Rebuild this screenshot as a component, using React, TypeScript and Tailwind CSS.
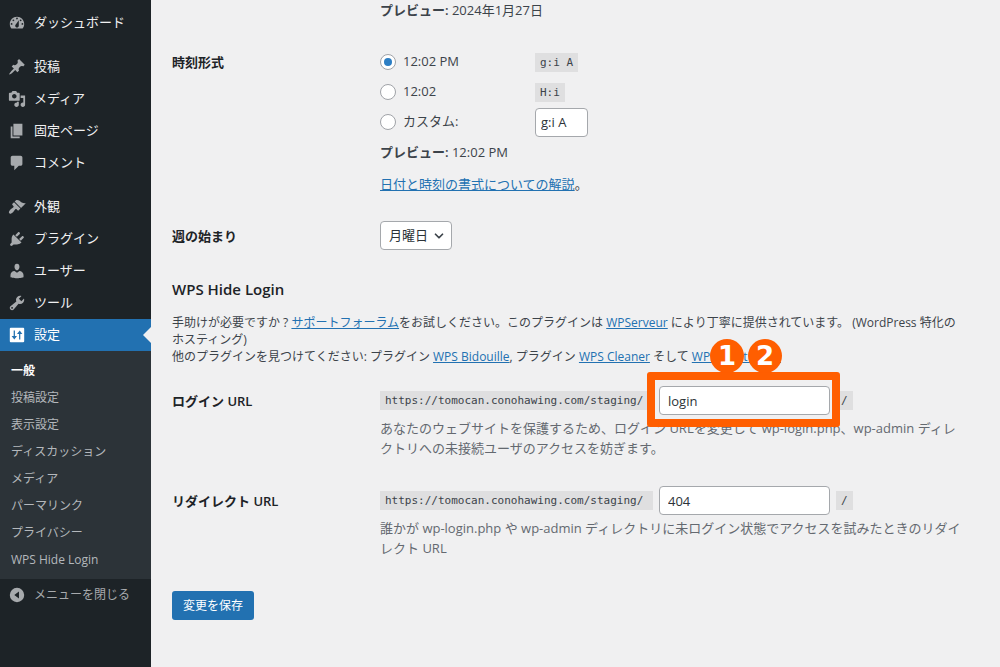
import React, { useState } from 'react';
import clsx from 'clsx';
import { ChevronDown } from 'lucide-react';

const menuIcons = {
  dashboard:
    'M3.76 16h12.48c1.1-1.37 1.76-3.11 1.76-5 0-4.42-3.58-8-8-8s-8 3.58-8 8c0 1.89.66 3.63 1.76 5zM10 4c.55 0 1 .45 1 1s-.45 1-1 1-1-.45-1-1 .45-1 1-1zM6 6c.55 0 1 .45 1 1s-.45 1-1 1-1-.45-1-1 .45-1 1-1zm8 0c.55 0 1 .45 1 1s-.45 1-1 1-1-.45-1-1 .45-1 1-1zm-5.37 5.55L12 7v6c0 1.1-.9 2-2 2s-2-.9-2-2c0-.57.24-1.08.63-1.45zM4 10c.55 0 1 .45 1 1s-.45 1-1 1-1-.45-1-1 .45-1 1-1zm12 0c.55 0 1 .45 1 1s-.45 1-1 1-1-.45-1-1 .45-1 1-1z',
  post: 'M10.44 3.02l1.82-1.82 6.36 6.35-1.83 1.82c-1.05-.68-2.48-.57-3.41.36l-.75.75c-.92.93-1.04 2.35-.35 3.41l-1.83 1.82-2.41-2.41-2.8 2.79c-.42.42-3.38 2.71-3.8 2.29s1.86-3.39 2.28-3.81l2.79-2.79L4.1 9.36l1.83-1.82c1.05.69 2.48.57 3.4-.36l.75-.75c.93-.92 1.05-2.35.36-3.41z',
  media:
    'M13 11V4c0-.55-.45-1-1-1h-1.67L9 1H5L3.67 3H2c-.55 0-1 .45-1 1v7c0 .55.45 1 1 1h10c.55 0 1-.45 1-1zM7 4.5c1.38 0 2.5 1.12 2.5 2.5S8.38 9.5 7 9.5 4.5 8.38 4.5 7 5.62 4.5 7 4.5zM14 6h5v10.5c0 1.38-1.12 2.5-2.5 2.5S14 17.88 14 16.5s1.12-2.5 2.5-2.5c.17 0 .34.02.5.05V9h-3V6zm-4 8.05V13h2v3.5c0 1.38-1.12 2.5-2.5 2.5S7 17.88 7 16.5 8.12 14 9.5 14c.17 0 .34.02.5.05z',
  page: 'M6 15V2h10v13H6zm-1 1h8v2H3V5h2v11z',
  comments: 'M5 2h9c1.1 0 2 .9 2 2v7c0 1.1-.9 2-2 2h-2l-5 5v-5H5c-1.1 0-2-.9-2-2V4c0-1.1.9-2 2-2z',
  appearance:
    'M14.48 11.06L7.41 3.99l1.5-1.5c.5-.56 2.3-.47 3.51.32 1.21.8 1.43 1.28 2.91 2.1 1.18.64 2.45 1.26 4.45.85zm-.71.71L6.7 4.7 4.93 6.47c-.39.39-.39 1.02 0 1.41l1.06 1.06c.39.39.39 1.03 0 1.42-.6.6-1.43 1.11-2.21 1.69-.35.26-.7.53-1.01.84C1.43 14.23.4 16.08 1.4 17.07c.99 1 2.84-.03 4.18-1.36.31-.31.58-.66.85-1.02.57-.78 1.08-1.61 1.69-2.21.39-.39 1.02-.39 1.41 0l1.06 1.06c.39.39 1.02.39 1.41 0z',
  plugins:
    'M13.11 4.36L9.87 7.6 8 5.73l3.24-3.24c.35-.34 1.05-.2 1.56.32.52.51.66 1.21.31 1.55zm-8 1.77l.91-1.12 9.01 9.01-1.19.84c-.71.71-2.63 1.16-3.82 1.16H6.14L4.9 17.26c-.59.59-1.54.59-2.12 0-.59-.58-.59-1.53 0-2.12l1.24-1.24v-3.88c0-1.13.4-3.19 1.09-3.89zm7.26 3.97l3.24-3.24c.34-.35 1.04-.21 1.55.31.52.51.66 1.21.31 1.55l-3.24 3.25z',
  users:
    'M10 9.25c-2.27 0-2.73-3.44-2.73-3.44C7 4.02 7.82 2 9.97 2c2.16 0 2.98 2.02 2.71 3.81 0 0-.41 3.44-2.68 3.44zm0 2.57L12.72 10c2.39 0 4.52 2.33 4.52 4.53v2.49s-3.65 1.13-7.24 1.13c-3.65 0-7.24-1.13-7.24-1.13v-2.49c0-2.25 1.94-4.48 4.47-4.48z',
  tools:
    'M16.68 9.77c-1.34 1.34-3.3 1.67-4.95.99l-5.41 6.52c-.99.99-2.59.99-3.58 0s-.99-2.59 0-3.57l6.52-5.42c-.68-1.65-.35-3.61.99-4.95 1.28-1.28 3.12-1.62 4.72-1.06l-2.89 2.89 2.82 2.82 2.86-2.87c.53 1.58.18 3.39-1.08 4.65zM3.81 16.21c.4.39 1.04.39 1.43 0 .4-.4.4-1.04 0-1.43-.39-.4-1.03-.4-1.43 0-.39.39-.39 1.03 0 1.43z',
  settings:
    'M18 17V3c0-.55-.45-1-1-1H3c-.55 0-1 .45-1 1v14c0 .55.45 1 1 1h14c.55 0 1-.45 1-1zM6.3 5h1.4v6H10l-3 4-3-4h2.3zM12.3 15h1.4V9H16l-3-4-3 4h2.3z',
  collapse: 'M10 2a8 8 0 1 0 0 16 8 8 0 0 0 0-16zM12.2 6v8L7 10z',
};

type IconName = keyof typeof menuIcons;

const menuGroups: { icon: IconName; label: string }[][] = [
  [{ icon: 'dashboard', label: 'ダッシュボード' }],
  [
    { icon: 'post', label: '投稿' },
    { icon: 'media', label: 'メディア' },
    { icon: 'page', label: '固定ページ' },
    { icon: 'comments', label: 'コメント' },
  ],
  [
    { icon: 'appearance', label: '外観' },
    { icon: 'plugins', label: 'プラグイン' },
    { icon: 'users', label: 'ユーザー' },
    { icon: 'tools', label: 'ツール' },
    { icon: 'settings', label: '設定' },
  ],
];

const settingsPages = [
  '一般',
  '投稿設定',
  '表示設定',
  'ディスカッション',
  'メディア',
  'パーマリンク',
  'プライバシー',
  'WPS Hide Login',
];

const timeFormats = [
  { value: 'g:i A', label: '12:02 PM' },
  { value: 'H:i', label: '12:02' },
];

const inputClass = 'h-[29px] rounded-[4px] border border-[#a5a8ac] bg-white px-2 text-[13px] text-[#2c3338]';
const radioClass =
  'grid size-4 shrink-0 appearance-none place-items-center rounded-full border border-[#a0a3a8] bg-white before:size-2 before:rounded-full checked:before:bg-[#2c7ec4]';

const MenuIcon = ({ name }: { name: IconName }) => (
  <svg viewBox="0 0 20 20" className="size-[18px] shrink-0" fill="currentColor" fillRule="evenodd" aria-hidden="true">
    <path d={menuIcons[name]} />
  </svg>
);

const Code = ({ children, className }: { children: React.ReactNode; className?: string }) => (
  <code
    className={clsx(
      "inline-block bg-[#dfdfe0] px-[5px] font-['DejaVu_Sans_Mono',monospace] text-[11px] leading-[19px] text-[#3c434a]",
      className
    )}
  >
    {children}
  </code>
);

const TextLink = ({ children }: { children: React.ReactNode }) => (
  <a href="#" className="text-[#2271b1] underline">
    {children}
  </a>
);

const Row = ({ label, htmlFor, children }: { label?: string; htmlFor?: string; children: React.ReactNode }) => (
  <div className="flex">
    <div className="w-[208px] shrink-0 pt-[5px] font-semibold leading-5 text-[#1d2327]">
      {htmlFor ? <label htmlFor={htmlFor}>{label}</label> : label}
    </div>
    <div className="min-w-0 flex-1">{children}</div>
  </div>
);

const Sidebar = () => (
  <nav className="w-[151px] shrink-0 bg-[#1d2327] pt-[7px] text-[#f0f0f1]">
    {menuGroups.map((group, i) => (
      <ul key={i} className={clsx(i > 0 && 'mt-3')}>
        {group.map(item => {
          const current = item.icon === 'settings';
          return (
            <li key={item.icon}>
              <a
                href="#"
                className={clsx('relative flex h-8 items-center gap-2 pl-2', current && 'bg-[#2271b1] text-white')}
              >
                <span className={clsx('flex', !current && 'text-[#a7aaad]')}>
                  <MenuIcon name={item.icon} />
                </span>
                {item.label}
                {current && (
                  <span className="absolute top-2 right-0 border-y-8 border-r-8 border-y-transparent border-r-[#f0f0f1]" />
                )}
              </a>
            </li>
          );
        })}
      </ul>
    ))}
    <ul className="bg-[#2c3338] py-[6px] text-xs">
      {settingsPages.map((page, i) => (
        <li key={page}>
          <a
            href="#"
            className={clsx('block pl-[11px] leading-[27px]', i === 0 ? 'font-semibold text-white' : 'text-[#b4b8bc]')}
          >
            {page}
          </a>
        </li>
      ))}
    </ul>
    <button type="button" className="flex h-8 w-full items-center gap-2 pl-2 text-xs text-[#a7aaad]">
      <MenuIcon name="collapse" />
      メニューを閉じる
    </button>
  </nav>
);

export default function App() {
  const [format, setFormat] = useState('g:i A');
  const [custom, setCustom] = useState('g:i A');

  return (
    <div className="flex min-h-screen bg-[#f0f0f1] font-['Open_Sans','Noto_Sans_CJK_JP',sans-serif] text-[13px] text-[#3c434a]">
      <Sidebar />
      <main className="min-w-0 flex-1 pr-[34px] pl-[21px]">
        <form onSubmit={e => e.preventDefault()}>
          <p className="pl-[208px] leading-5">
            <strong className="font-semibold">プレビュー:</strong> 2024年1月27日
          </p>

          <div className="mt-[27px]">
            <Row label="時刻形式">
              <fieldset aria-label="時刻形式">
                {timeFormats.map(f => (
                  <div key={f.value} className="flex h-[30px] items-center">
                    <label className="flex w-[155px] items-center gap-[7px]">
                      <input
                        type="radio"
                        name="time_format"
                        className={radioClass}
                        checked={format === f.value}
                        onChange={() => setFormat(f.value)}
                      />
                      {f.label}
                    </label>
                    <Code>{f.value}</Code>
                  </div>
                ))}
                <div className="flex h-[30px] items-center">
                  <label className="flex w-[155px] items-center gap-[7px]">
                    <input
                      type="radio"
                      name="time_format"
                      className={radioClass}
                      checked={format === 'custom'}
                      onChange={() => setFormat('custom')}
                    />
                    カスタム:
                  </label>
                  <input
                    type="text"
                    aria-label="カスタム時刻形式"
                    className={clsx(inputClass, 'w-[53px] px-[5px]')}
                    value={custom}
                    onChange={e => setCustom(e.target.value)}
                  />
                </div>
              </fieldset>
              <p className="mt-[5px] leading-5">
                <strong className="font-semibold">プレビュー:</strong> 12:02 PM
              </p>
              <p className="mt-3 leading-5">
                <TextLink>日付と時刻の書式についての解説</TextLink>。
              </p>
            </Row>
          </div>

          <div className="mt-[27px]">
            <Row label="週の始まり" htmlFor="start_of_week">
              <div className="relative inline-flex">
                <select id="start_of_week" className={clsx(inputClass, 'w-[72px] appearance-none')}>
                  <option>月曜日</option>
                </select>
                <ChevronDown className="pointer-events-none absolute top-2 right-[6px] size-[14px]" strokeWidth={3} />
              </div>
            </Row>
          </div>

          <h2 className="mt-[29px] text-[15px] leading-5 font-semibold text-[#1d2327]">WPS Hide Login</h2>
          <p className="mt-[15px] text-xs leading-[17px]">
            手助けが必要ですか ? <TextLink>サポートフォーラム</TextLink>をお試しください。このプラグインは{' '}
            <TextLink>WPServeur</TextLink> により丁寧に提供されています。 (WordPress 特化のホスティング)
            <br />
            他のプラグインを見つけてください: プラグイン <TextLink>WPS Bidouille</TextLink>, プラグイン{' '}
            <TextLink>WPS Cleaner</TextLink> そして <TextLink>WPS Limit Login</TextLink>
          </p>

          <div className="mt-[21px] flex flex-col gap-7">
            <Row label="ログイン URL" htmlFor="whl_page">
              <div className="flex h-[29px] items-center gap-[6px]">
                <Code className="w-[273px]">https://tomocan.conohawing.com/staging/</Code>
                <div className="relative">
                  <input id="whl_page" type="text" defaultValue="login" className={clsx(inputClass, 'block w-[171px]')} />
                  <div className="pointer-events-none absolute -top-[14px] -right-[10px] -bottom-3 -left-3 rounded-[3px] border-8 border-[#ff5e00]" />
                  <div className="pointer-events-none absolute bottom-[42px] left-[51px] flex gap-1 font-['DejaVu_Sans',sans-serif] text-[26px] leading-none font-bold text-white">
                    <span className="grid size-[34px] place-items-center rounded-full bg-[#ff5e00]">1</span>
                    <span className="grid size-[34px] place-items-center rounded-full bg-[#ff5e00]">2</span>
                  </div>
                </div>
                <Code>/</Code>
              </div>
              <p className="mt-[3px] leading-5 text-[#646970]">
                あなたのウェブサイトを保護するため、ログイン URLを変更して wp-login.php、wp-admin
                ディレクトリへの未接続ユーザのアクセスを妨ぎます。
              </p>
            </Row>
            <Row label="リダイレクト URL" htmlFor="whl_redirect">
              <div className="flex h-[29px] items-center gap-[6px]">
                <Code className="w-[273px]">https://tomocan.conohawing.com/staging/</Code>
                <input id="whl_redirect" type="text" defaultValue="404" className={clsx(inputClass, 'w-[171px]')} />
                <Code>/</Code>
              </div>
              <p className="mt-[3px] leading-5 text-[#646970]">
                誰かが wp-login.php や wp-admin
                ディレクトリに未ログイン状態でアクセスを試みたときのリダイレクト URL
              </p>
            </Row>
          </div>

          <button
            type="submit"
            className="mt-[33px] h-[29px] rounded-[3px] bg-[#2271b1] px-[11px] text-xs text-white hover:bg-[#135e96]"
          >
            変更を保存
          </button>
        </form>
      </main>
    </div>
  );
}
